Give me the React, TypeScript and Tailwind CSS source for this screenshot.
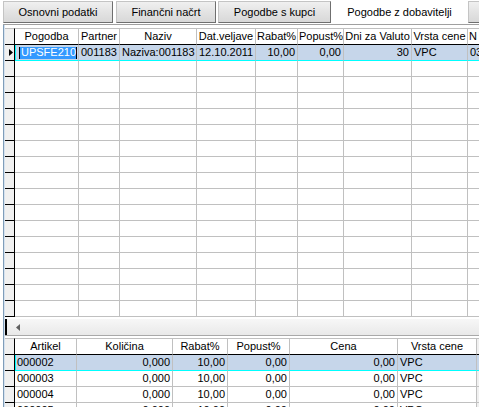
import React from "react";

const F = "font-['Liberation_Sans',Arial,sans-serif]";

type Col = { w: string; h: string; a: "l" | "r"; ha?: "c" | "l" };

const upperCols: Col[] = [
  { w: "w-[64px]", h: "Pogodba", a: "l" },
  { w: "w-[41px]", h: "Partner", a: "l" },
  { w: "w-[77px]", h: "Naziv", a: "l" },
  { w: "w-[59px]", h: "Dat.veljave", a: "l" },
  { w: "w-[42px]", h: "Rabat%", a: "r" },
  { w: "w-[46px]", h: "Popust%", a: "r" },
  { w: "w-[68px]", h: "Dni za Valuto", a: "r" },
  { w: "w-[56px]", h: "Vrsta cene", a: "l" },
  { w: "w-[60px]", h: "N", a: "l", ha: "l" },
];

const upperRow = ["UPSFE210", "001183", "Naziva:001183", "12.10.2011", "10,00", "0,00", "30", "VPC", "03"];

const lowerCols: Col[] = [
  { w: "w-[62px]", h: "Artikel", a: "l" },
  { w: "w-[96px]", h: "Količina", a: "r" },
  { w: "w-[55px]", h: "Rabat%", a: "r" },
  { w: "w-[62px]", h: "Popust%", a: "r" },
  { w: "w-[108px]", h: "Cena", a: "r" },
  { w: "w-[79px]", h: "Vrsta cene", a: "l" },
];

const lowerRows = [
  ["000002", "0,000", "10,00", "0,00", "0,00", "VPC"],
  ["000003", "0,000", "10,00", "0,00", "0,00", "VPC"],
  ["000004", "0,000", "10,00", "0,00", "0,00", "VPC"],
  ["000005", "0,000", "10,00", "0,00", "0,00", "VPC"],
];

function Tab({ w, label, active }: { w: string; label: string; active?: boolean }) {
  if (active) {
    return (
      <div className={`${w} h-[22px] shrink-0 flex items-center justify-center bg-white whitespace-nowrap`}>
        {label}
      </div>
    );
  }
  return (
    <div
      className={`${w} h-[22px] shrink-0 flex items-center justify-center whitespace-nowrap overflow-hidden bg-linear-to-b from-[#f0f0f0] via-[#e3e3e3] to-[#d8d8d8] border border-t-[#c4c4c4] border-l-[#c4c4c4] border-r-[#6f6f6f] border-b-[#6f6f6f]`}
    >
      {label}
    </div>
  );
}

function TabStrip() {
  return (
    <div className="h-[24px] flex items-start pt-[1px] pl-[3px] bg-white overflow-hidden">
      <Tab w="w-[110px]" label="Osnovni podatki" />
      <div className="w-[3px] shrink-0" />
      <Tab w="w-[100px]" label="Finančni načrt" />
      <div className="w-[2px] shrink-0" />
      <Tab w="w-[113px]" label="Pogodbe s kupci" />
      <Tab w="w-[137px]" label="Pogodbe z dobavitelji" active />
      <Tab w="w-[40px]" label="" />
    </div>
  );
}

function Indicator({ header, arrow }: { header?: boolean; arrow?: boolean }) {
  return (
    <div
      className={`w-[10px] shrink-0 bg-[#f0f0f0] border-r border-r-black border-b border-b-black flex items-center justify-end pr-[1px] ${
        header ? "border-t border-t-[#c0c0c0]" : ""
      }`}
    >
      {arrow && (
        <svg width="4" height="7" viewBox="0 0 4 7" className="block">
          <path d="M0 0 L4 3.5 L0 7 Z" fill="#000" />
        </svg>
      )}
    </div>
  );
}

function HeaderRow({ cols, extra }: { cols: Col[]; extra?: boolean }) {
  return (
    <div className="flex h-[17px] shrink-0">
      <Indicator header />
      {cols.map((c) => (
        <div
          key={c.h}
          className={`${c.w} shrink-0 bg-white border-t border-t-[#c0c0c0] border-r border-r-[#c0c0c0] border-b border-b-black whitespace-nowrap overflow-hidden px-[1px] ${
            c.ha === "l" ? "text-left" : "text-center"
          }`}
        >
          {c.h}
        </div>
      ))}
      {extra && <div className="flex-1 bg-[#f0f0f0] border-t border-t-[#c0c0c0] border-b border-b-black" />}
    </div>
  );
}

function DataRow({
  cols,
  values,
  selected,
  arrow,
  editFirst,
  extra,
}: {
  cols: Col[];
  values?: string[];
  selected?: boolean;
  arrow?: boolean;
  editFirst?: boolean;
  extra?: boolean;
}) {
  return (
    <div className="flex h-[16px] shrink-0">
      <Indicator arrow={arrow} />
      {cols.map((c, i) => {
        const v = values ? values[i] : "";
        const bottom = selected ? "border-b border-b-[#00ffff]" : "border-b border-b-[#c0c0c0]";
        const left = selected && i === 0 ? "border-l border-l-[#00ffff]" : "";
        const bg = selected ? "bg-[#c6d6ea]" : "bg-white";
        const isEdit = editFirst && i === 0;
        return (
          <div
            key={i}
            className={`${c.w} shrink-0 ${bg} ${bottom} ${left} border-r border-r-[#c0c0c0] whitespace-nowrap overflow-hidden ${
              isEdit ? "pl-0 pr-0" : selected && i === 0 ? "pl-[1px] pr-[2px]" : "pl-[2px] pr-[2px]"
            } ${c.a === "r" ? "text-right" : "text-left"}`}
          >
            {isEdit ? (
              <span className="inline-block mt-[1px] ml-[3px] h-[12px] w-[58px] leading-[11px] bg-[#3399ff] text-white border-x border-black pl-[1px]">
                {v}
              </span>
            ) : (
              v
            )}
          </div>
        );
      })}
      {extra && (
        <div
          className={`flex-1 ${
            selected ? "bg-[#c6d6ea] border-b border-b-[#00ffff]" : "bg-[#f0f0f0] border-b border-b-[#c0c0c0]"
          }`}
        />
      )}
    </div>
  );
}

function UpperGrid() {
  const rows = Array.from({ length: 17 }, (_, i) => i);
  return (
    <div className="flex flex-col shrink-0 overflow-hidden">
      <HeaderRow cols={upperCols} />
      {rows.map((i) =>
        i === 0 ? (
          <DataRow key={i} cols={upperCols} values={upperRow} selected arrow editFirst />
        ) : (
          <DataRow key={i} cols={upperCols} />
        )
      )}
    </div>
  );
}

function Scrollbar() {
  return (
    <div className="flex h-[17px] shrink-0 border-b border-b-[#a9a9a9]">
      <div className="w-[2px] bg-black" />
      <div className="flex-1 bg-linear-to-b from-[#f7f7f7] to-[#e9e9e9] flex items-center pl-[9px]">
        <svg width="4" height="7" viewBox="0 0 4 7" className="block">
          <path d="M4 0 L0 3.5 L4 7 Z" fill="#606060" />
        </svg>
      </div>
    </div>
  );
}

function LowerGrid() {
  return (
    <div className="flex flex-col shrink-0 overflow-hidden">
      <HeaderRow cols={lowerCols} extra />
      {lowerRows.map((r, i) => (
        <DataRow key={i} cols={lowerCols} values={r} selected={i === 0} extra />
      ))}
    </div>
  );
}

export default function App() {
  return (
    <div className={`w-[479px] h-[407px] overflow-hidden bg-white text-black text-[11px] leading-[15px] ${F}`}>
      <TabStrip />
      <div className="ml-[3px] h-[383px] flex border-t border-t-[#a0a0a0]">
        <div className="w-[1px] shrink-0 bg-[#7f9db9]" />
        <div className="w-[1px] shrink-0 bg-[#d6e2ef]" />
        <div className="flex-1 min-w-0 overflow-hidden flex flex-col pt-[3px]">
          <UpperGrid />
          <div className="h-[2px] shrink-0" />
          <Scrollbar />
          <div className="h-[2px] shrink-0" />
          <LowerGrid />
        </div>
      </div>
    </div>
  );
}
